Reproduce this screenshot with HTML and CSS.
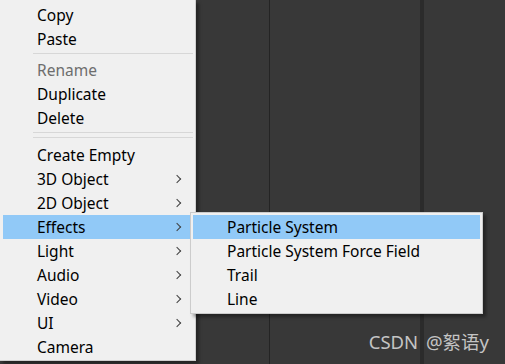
FILE: index.html
```html
<!DOCTYPE html>
<html lang="en">
<head>
    <meta charset="UTF-8">
    <title>Hierarchy context menu</title>
    <link rel="stylesheet" href="styles.css">
</head>
<body>

<div class="editor">
    <div class="panel panel-left"></div>
    <div class="panel panel-mid"></div>
    <div class="panel panel-right"></div>
</div>

<!-- context menu -->
<div class="menu main-menu">
    <div class="item">Copy</div>
    <div class="item">Paste</div>
    <div class="sep"></div>
    <div class="item disabled">Rename</div>
    <div class="item">Duplicate</div>
    <div class="item">Delete</div>
    <div class="sep"></div>
    <div class="sep sep-last"></div>
    <div class="item">Create Empty</div>
    <div class="item sub">3D Object</div>
    <div class="item sub">2D Object</div>
    <div class="item sub active">Effects</div>
    <div class="item sub">Light</div>
    <div class="item sub">Audio</div>
    <div class="item sub">Video</div>
    <div class="item sub">UI</div>
    <div class="item">Camera</div>
</div>

<!-- Effects submenu -->
<div class="menu sub-menu">
    <div class="item active">Particle System</div>
    <div class="item">Particle System Force Field</div>
    <div class="item">Trail</div>
    <div class="item">Line</div>
</div>

<div class="watermark">CSDN @絮语y</div>

</body>
</html>
```

FILE: styles.css
```css
body {
    margin: 0;
    width: 505px;
    height: 364px;
    overflow: hidden;
    position: relative;
    background-color: #383838;
    font-family: "Noto Sans", "Noto Sans CJK SC", sans-serif;
}
.editor {
    display: flex;
    height: 364px;
}
.panel {
    background-color: #383838;
}
.panel-left {
    width: 269px;
    border-right: 1px solid #242424;
}
.panel-mid {
    width: 150px;
    border-right: 4px solid #2b2b2b;
}
.panel-right {
    flex: 1;
}
/* menus */
.menu {
    position: absolute;
    box-sizing: border-box;
    background-color: #f0f0f0;
    font-size: 15.5px;
    color: #000;
    box-shadow: 3px 3px 3px rgba(0, 0, 0, 0.35);
}
.main-menu {
    left: 0;
    top: 0;
    width: 196px;
    padding: 3px 2px 1px 3px;
    border-right: 1px solid #cfcfcf;
    border-bottom: 1px solid #cfcfcf;
}
.sub-menu {
    left: 190px;
    top: 212px;
    width: 293px;
    padding: 2px;
    border: 1px solid #cccccc;
}
.item {
    height: 24px;
    line-height: 25px;
    padding-left: 34px;
    position: relative;
    white-space: nowrap;
}
.item.active {
    background-color: #91c9f7;
}
.item.disabled {
    color: #6d6d6d;
}
.item.sub::after {
    content: "";
    position: absolute;
    right: 13px;
    top: 9px;
    width: 5px;
    height: 5px;
    border-right: 1px solid #404040;
    border-top: 1px solid #404040;
    transform: rotate(45deg);
}
.sep {
    height: 1px;
    margin: 2px 0 4px 30px;
    background-color: #d7d7d7;
}
.sep-last {
    margin-bottom: 5px;
}
.watermark {
    position: absolute;
    right: 16px;
    bottom: 10px;
    font-size: 18.5px;
    word-spacing: 3px;
    color: #c4c4c4;
    font-family: "Noto Sans", "Noto Sans CJK SC", sans-serif;
}
```
